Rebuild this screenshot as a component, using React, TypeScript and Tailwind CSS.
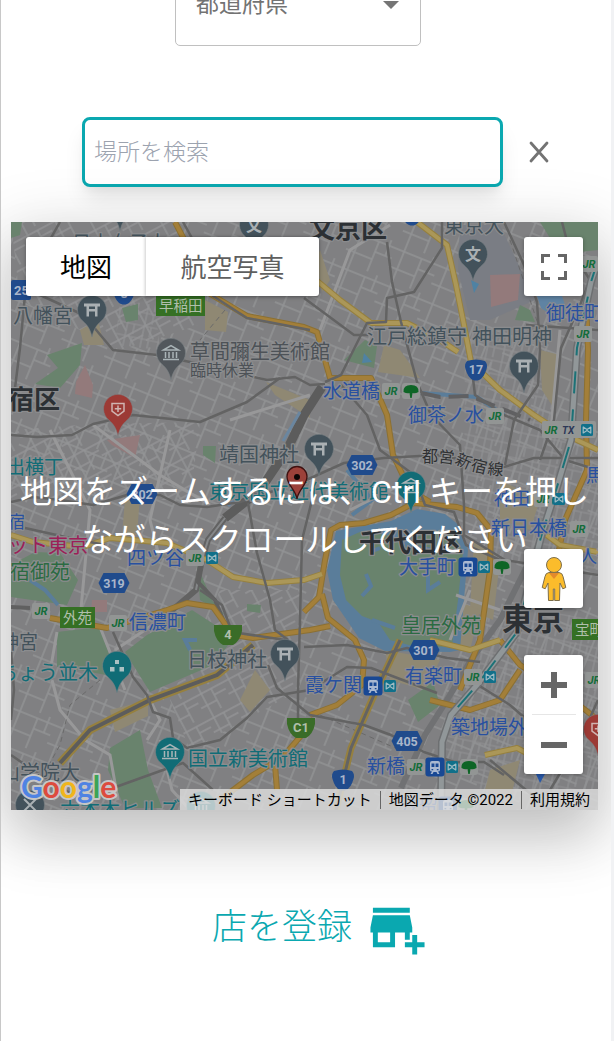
import React from "react";
import { MdAddBusiness } from "react-icons/md";

type Point = [number, number];

const line = (pts: Point[]) => pts.map((p) => p.join(",")).join(" ");

const GRAY = "#636363";
const SLATE = "#43525b";
const TEAL = "#116c76";
const BLUE = "#2850a0";
const GREEN = "#2b6b42";
const INK = "#2c3034";

const yellowRoads: Point[][] = [
  [[417, 222], [447, 245], [456, 285], [464, 325], [471, 362], [500, 390], [534, 415], [560, 432], [598, 450]],
  [[310, 275], [340, 300], [371, 323], [407, 323], [440, 340], [458, 352]],
  [[11, 535], [33, 542], [83, 547], [110, 538], [167, 543], [207, 560], [233, 577], [267, 583], [304, 580], [322, 574]],
  [[485, 755], [517, 748], [540, 760]],
  [[540, 530], [560, 545], [598, 552]],
  [[430, 640], [470, 650], [500, 640]],
];

const orangeRoads: Point[][] = [
  [[175, 222], [187, 245], [207, 292], [247, 316], [304, 327], [317, 332], [330, 378], [371, 378], [387, 415], [393, 455], [410, 490], [430, 502]],
  [[304, 612], [319, 597], [325, 560], [331, 530], [340, 525], [364, 523], [391, 515], [414, 503], [457, 507], [477, 513], [491, 530], [490, 570], [480, 640], [460, 690]],
  [[50, 618], [107, 628], [167, 610], [187, 603], [213, 607], [233, 635], [253, 638], [310, 630], [330, 626]],
  [[322, 594], [328, 618], [355, 640], [364, 660], [362, 685], [337, 705], [310, 715]],
  [[220, 800], [253, 775], [283, 757], [310, 725]],
  [[283, 757], [275, 765], [277, 790]],
  [[586, 300], [588, 350], [586, 420], [587, 470], [565, 520], [555, 570]],
  [[500, 640], [520, 665], [560, 690], [598, 720]],
  [[430, 700], [470, 710], [500, 700], [520, 670]],
];

const grayRoads: Point[][] = [
  [[60, 222], [43, 252], [25, 295], [20, 348], [15, 388]],
  [[183, 222], [193, 240], [213, 296], [247, 318], [310, 330]],
  [[40, 295], [77, 312], [92, 325], [113, 350], [157, 355], [190, 362], [267, 380], [295, 377], [310, 385], [325, 384]],
  [[11, 435], [37, 437], [72, 435], [93, 424], [133, 415], [200, 422], [247, 402], [280, 378]],
  [[11, 502], [33, 497], [60, 500], [93, 505], [127, 495], [160, 495], [180, 505], [207, 507], [240, 502], [304, 481], [344, 463], [384, 458], [437, 455], [504, 467], [534, 458], [598, 458]],
  [[248, 503], [257, 553], [270, 600], [275, 630], [288, 640]],
  [[312, 500], [302, 540], [300, 620], [298, 690], [298, 725]],
  [[25, 528], [70, 538], [105, 545]],
  [[113, 632], [133, 677], [147, 695], [153, 712], [170, 718], [173, 738], [187, 748], [220, 740], [247, 718], [267, 697], [310, 690], [347, 667], [371, 668], [437, 693]],
  [[11, 755], [40, 775], [70, 793], [113, 788], [163, 770], [183, 763], [213, 790]],
  [[268, 665], [277, 688], [310, 715], [364, 725], [391, 735], [424, 752], [454, 762], [484, 762], [504, 775]],
  [[304, 647], [347, 645], [387, 653], [407, 648], [447, 658], [480, 662]],
  [[387, 242], [392, 282], [401, 322], [417, 382], [431, 415], [460, 445], [464, 505]],
  [[442, 222], [442, 248], [414, 292], [387, 298], [386, 322], [367, 323], [341, 375], [325, 382]],
  [[304, 298], [354, 335], [368, 335]],
  [[504, 222], [524, 265], [537, 302], [540, 350], [538, 385], [514, 420], [505, 465]],
  [[562, 222], [568, 245], [590, 280], [580, 305], [561, 348], [554, 420], [540, 460]],
  [[526, 325], [598, 330]],
  [[471, 362], [475, 395], [504, 415], [540, 430], [565, 460], [598, 470]],
  [[341, 385], [367, 415], [380, 450], [414, 475], [425, 505], [454, 512], [466, 545], [500, 560]],
  [[464, 505], [464, 535], [505, 560], [598, 575]],
  [[200, 590], [222, 605], [232, 632], [285, 640]],
  [[11, 650], [14, 690], [11, 720]],
  [[598, 700], [580, 740], [550, 790]],
  [[490, 760], [520, 785], [550, 810]],
  [[470, 680], [510, 705], [550, 740]],
];

const greens: Point[][] = [
  [[147, 635], [192, 610], [215, 625], [232, 640], [213, 665], [150, 692], [125, 652]],
  [[57, 632], [100, 627], [117, 677], [90, 672], [57, 667]],
  [[11, 565], [35, 552], [60, 553], [78, 580], [67, 605], [11, 597]],
  [[47, 355], [82, 343], [80, 365], [60, 388], [35, 384], [58, 368]],
  [[110, 748], [140, 730], [148, 770], [162, 808], [125, 808], [108, 770]],
  [[344, 360], [365, 340], [377, 346], [374, 368]],
  [[540, 222], [598, 222], [598, 250], [560, 254]],
  [[408, 700], [433, 682], [440, 705], [418, 722]],
  [[122, 308], [138, 304], [138, 320], [126, 322]],
  [[520, 305], [530, 310], [535, 322], [515, 320]],
  [[197, 565], [212, 600], [225, 615], [200, 600]],
  [[247, 604], [261, 605], [260, 613], [247, 611]],
  [[203, 446], [216, 446], [215, 463], [203, 455]],
  [[11, 222], [22, 222], [20, 235], [11, 238]],
];

const beiges: Point[][] = [
  [[110, 710], [148, 700], [148, 716], [115, 732]],
  [[205, 300], [228, 312], [226, 332], [205, 330]],
  [[266, 382], [310, 400], [310, 418], [275, 395]],
  [[384, 345], [400, 350], [420, 378], [378, 372]],
  [[474, 540], [500, 560], [493, 620], [470, 610]],
  [[500, 480], [540, 500], [530, 530], [500, 520]],
  [[540, 350], [560, 355], [555, 410], [542, 390]],
  [[385, 650], [440, 660], [425, 690], [390, 680]],
  [[125, 500], [140, 495], [137, 535], [122, 535]],
  [[255, 670], [270, 690], [250, 712], [240, 700]],
  [[80, 330], [98, 320], [104, 345], [84, 345]],
  [[320, 250], [330, 280], [322, 292], [316, 260]],
  [[455, 600], [480, 610], [470, 650], [450, 640]],
  [[490, 770], [520, 760], [510, 800], [485, 790]],
];

const pinks: Point[][] = [
  [[490, 275], [520, 274], [518, 300], [491, 307]],
  [[85, 365], [93, 385], [92, 398], [75, 394], [76, 382]],
  [[107, 440], [140, 435], [135, 458], [112, 445]],
  [[92, 600], [107, 600], [107, 612], [91, 612]],
];

type Label = { t: string; x: number; y: number; s: number; c: string; b?: boolean };

const labels: Label[] = [
  { t: "日本女子大", x: 72, y: 250, s: 19, c: SLATE },
  { t: "文京区", x: 309, y: 238, s: 26, c: INK, b: true },
  { t: "東京大", x: 444, y: 233, s: 20, c: SLATE },
  { t: "八幡宮", x: 13, y: 323, s: 20, c: SLATE },
  { t: "草間彌生美術館", x: 190, y: 359, s: 20, c: "#4d5257" },
  { t: "臨時休業", x: 190, y: 376, s: 16, c: "#4d5257" },
  { t: "宿区", x: 8, y: 409, s: 26, c: INK, b: true },
  { t: "江戸総鎮守 神田明神", x: 367, y: 344, s: 20, c: SLATE },
  { t: "御徒町", x: 546, y: 320, s: 19, c: BLUE },
  { t: "水道橋", x: 323, y: 398, s: 19, c: BLUE },
  { t: "御茶ノ水", x: 408, y: 422, s: 19, c: BLUE },
  { t: "靖国神社", x: 219, y: 462, s: 20, c: SLATE },
  { t: "出横丁", x: 6, y: 474, s: 19, c: TEAL },
  { t: "東京国立近代美術館", x: 209, y: 499, s: 20, c: TEAL },
  { t: "神田", x: 494, y: 505, s: 18, c: BLUE },
  { t: "馬", x: 586, y: 482, s: 18, c: BLUE },
  { t: "宿", x: 8, y: 528, s: 17, c: BLUE },
  { t: "ット東京", x: 8, y: 553, s: 20, c: "#9c2057" },
  { t: "宿御苑", x: 10, y: 579, s: 20, c: GREEN },
  { t: "四ツ谷", x: 127, y: 565, s: 19, c: BLUE },
  { t: "新日本橋", x: 491, y: 535, s: 19, c: BLUE },
  { t: "千代田区", x: 359, y: 552, s: 26, c: INK, b: true },
  { t: "大手町", x: 399, y: 574, s: 19, c: BLUE },
  { t: "人形", x: 579, y: 563, s: 18, c: BLUE },
  { t: "信濃町", x: 129, y: 629, s: 19, c: BLUE },
  { t: "神宮", x: 0, y: 649, s: 19, c: SLATE },
  { t: "ちょう並木", x: -2, y: 680, s: 20, c: TEAL },
  { t: "日枝神社", x: 187, y: 667, s: 20, c: SLATE },
  { t: "皇居外苑", x: 401, y: 633, s: 20, c: GREEN },
  { t: "東京", x: 502, y: 630, s: 31, c: INK, b: true },
  { t: "霞ケ関", x: 305, y: 692, s: 19, c: BLUE },
  { t: "有楽町", x: 405, y: 683, s: 19, c: BLUE },
  { t: "築地場外", x: 451, y: 734, s: 19, c: BLUE },
  { t: "国立新美術館", x: 188, y: 766, s: 20, c: TEAL },
  { t: "新橋", x: 367, y: 773, s: 19, c: BLUE },
  { t: "山学院大", x: 0, y: 780, s: 20, c: SLATE },
  { t: "六本木ヒルズ", x: 60, y: 817, s: 20, c: TEAL },
  { t: "汐留", x: 400, y: 813, s: 19, c: BLUE },
];

const subwayLabel: { t: string; x: number; y: number; r: number }[] = [
  { t: "都", x: 422, y: 462, r: 0 },
  { t: "営", x: 438, y: 462, r: 6 },
  { t: "新", x: 454, y: 463, r: 24 },
  { t: "宿", x: 470, y: 470, r: 14 },
  { t: "線", x: 487, y: 474, r: 6 },
];

function Pin({ x, y, fill, children }: { x: number; y: number; fill: string; children?: React.ReactNode }) {
  return (
    <g transform={`translate(${x} ${y})`}>
      <path
        d="M0 27C-2 18-5 15-9.500 10.800A14.500 14.500 0 1 1 9.500 10.800C5 15 2 18 0 27Z"
        fill={fill}
        stroke="#7b8285"
        strokeWidth="0.600"
      />
      {children}
    </g>
  );
}

function Torii() {
  return <path d="M-8-6.500H8V-3.500H5.500V0H5.500V6.500H3V1.500H-3V6.500H-5.500V-3.500H-8ZM-3-3.500V-1H3V-3.500Z" fill="#aab0b3" fillRule="evenodd" />;
}

function Museum() {
  return (
    <g fill="none" stroke="#aab4b7" strokeWidth="1.500">
      <path d="M-7.500-3L0-7.500L7.500-3Z" />
      <path d="M-5.500-1V5M-2-1V5M2-1V5M5.500-1V5M-8 6.500H8" />
    </g>
  );
}

function School() {
  return (
    <text y="6" textAnchor="middle" fontSize="16" fontWeight="700" fill="#aab0b3">
      文
    </text>
  );
}

function Cross() {
  return (
    <g fill="none" stroke="#d0b4b1" strokeWidth="1.500">
      <path d="M-6-5.500H6V2L0 6.500L-6 2Z" />
      <path d="M0-3.500V3M-3.200-.300H3.200" />
    </g>
  );
}

function Jr({ x, y }: { x: number; y: number }) {
  return (
    <g transform={`translate(${x} ${y})`}>
      <rect x="-9" y="-8" width="18" height="16" rx="2" fill="#929594" />
      <text y="4" textAnchor="middle" fontFamily="Inter, sans-serif" fontSize="10.500" fontWeight="700" fontStyle="italic" fill="#136c3a">
        JR
      </text>
    </g>
  );
}

function Metro({ x, y }: { x: number; y: number }) {
  return (
    <g transform={`translate(${x} ${y})`}>
      <rect x="-6" y="-6" width="12" height="12" rx="1.500" fill="#11708a" />
      <path d="M-3.800-3V3L0 .500L3.800 3V-3L0-.500Z" fill="none" stroke="#9ebcc4" strokeWidth="1.200" strokeLinejoin="round" />
    </g>
  );
}

function Train({ x, y }: { x: number; y: number }) {
  return (
    <g transform={`translate(${x} ${y})`}>
      <rect x="-9.500" y="-9.500" width="19" height="19" rx="3" fill="#184894" />
      <path d="M-3-6H3Q5-6 5-4V3Q5 4.500 3 4.500L4.500 7H2.500L1.500 5H-1.500L-2.500 7H-4.500L-3 4.500Q-5 4.500-5 3V-4Q-5-6-3-6Z" fill="#a9b8d1" />
      <path d="M-3.500-3.500H-.600V0H-3.500ZM.600-3.500H3.500V0H.600ZM-3.500 2H-1.800V3.300H-3.500ZM1.800 2H3.500V3.300H1.800Z" fill="#184894" />
    </g>
  );
}

function Ginkgo({ x, y }: { x: number; y: number }) {
  return (
    <g transform={`translate(${x} ${y})`}>
      <rect x="-9" y="-8" width="18" height="16" rx="3" fill="#929594" />
      <path d="M-7.500 1Q-8-6 0-6Q8-6 7.500 1Q4 3 1.500 2L.700 7H-.700L-1.500 2Q-4 3-7.500 1Z" fill="#0e6526" />
    </g>
  );
}

function Hex({ x, y, t }: { x: number; y: number; t: string }) {
  return (
    <g transform={`translate(${x} ${y})`}>
      <path d="M-15.500 0L-10.500-10H10.500L15.500 0L10.500 10H-10.500Z" fill="#204b8c" />
      <text y="4.500" textAnchor="middle" fontSize="12.500" fontWeight="700" fill="#a9b6ca">
        {t}
      </text>
    </g>
  );
}

function Shield({ x, y, t }: { x: number; y: number; t: string }) {
  return (
    <g transform={`translate(${x} ${y})`}>
      <path d="M-9-9Q0-12 9-9Q12-6 10.500-1Q8 8 3 10Q0 11-3 10Q-8 8-10.500-1Q-12-6-9-9Z" fill="#204b8c" />
      <text y="4" textAnchor="middle" fontSize="12.500" fontWeight="700" fill="#a9b6ca">
        {t}
      </text>
    </g>
  );
}

function Express({ x, y, t }: { x: number; y: number; t: string }) {
  return (
    <g transform={`translate(${x} ${y})`}>
      <path d="M-14-10H14V-4Q12 6 5 10H-5Q-12 6-14-4Z" fill="#3a6c28" />
      <text y="4" textAnchor="middle" fontSize="13" fontWeight="700" fill="#b0bfab">
        {t}
      </text>
    </g>
  );
}

function Interchange({ x, y, w, t }: { x: number; y: number; w: number; t: string }) {
  return (
    <g transform={`translate(${x} ${y})`}>
      <rect width={w} height="21" fill="#357024" />
      <text x="3" y="16" fontSize="14.500" fill="#b0bfab">
        {t}
      </text>
    </g>
  );
}

function MapArt() {
  return (
    <svg
      viewBox="11 222 587 588"
      preserveAspectRatio="xMidYMid slice"
      className="absolute inset-0 h-full w-full font-['Roboto','Noto_Sans_CJK_JP',sans-serif]"
      aria-hidden="true"
    >
      <defs>
        <pattern id="streets-a" width="46" height="38" patternUnits="userSpaceOnUse" patternTransform="rotate(22)">
          <path d="M0 6H46M0 25H28M28 17H46M9 0V38M28 6V38M39 0V17" stroke="#929395" strokeWidth="1.500" fill="none" />
        </pattern>
        <pattern id="streets-b" width="31" height="27" patternUnits="userSpaceOnUse" patternTransform="rotate(-28)">
          <path d="M0 5H31M0 18H18M7 0V27M18 5V27M18 12H31" stroke="#939496" strokeWidth="1.400" fill="none" />
        </pattern>
        <pattern id="streets-c" width="17" height="13" patternUnits="userSpaceOnUse" patternTransform="rotate(12)">
          <path d="M0 3H17M5 0V13M12 3V13" stroke="#919294" strokeWidth="1.200" fill="none" />
        </pattern>
      </defs>
      <rect x="11" y="222" width="587" height="588" fill="#808082" />
      <rect x="11" y="222" width="587" height="588" fill="url(#streets-a)" />
      <polygon points="11,222 175,222 215,320 120,350 20,300" fill="#808082" />
      <polygon points="11,222 175,222 215,320 120,350 20,300" fill="url(#streets-b)" />
      <polygon points="11,430 93,424 200,422 190,500 11,500" fill="url(#streets-b)" />
      <polygon points="220,590 300,590 300,690 190,750 170,700" fill="#808082" />
      <polygon points="220,590 300,590 300,690 190,750 170,700" fill="url(#streets-b)" />
      <polygon points="120,300 155,305 160,350 115,345" fill="url(#streets-c)" />
      <polygon points="465,330 540,330 560,430 598,460 598,570 500,560 464,500" fill="url(#streets-c)" />
      <polygon points="480,600 598,620 598,810 490,800 440,745" fill="url(#streets-c)" />
      <polygon points="460,225 500,225 535,300 490,320 470,320 458,270" fill="#7a7d84" />
      {beiges.map((p, i) => (
        <polygon key={i} points={line(p)} fill="#8f8873" />
      ))}
      {pinks.map((p, i) => (
        <polygon key={i} points={line(p)} fill="#937a7b" />
      ))}
      {greens.map((p, i) => (
        <polygon key={i} points={line(p)} fill="#69836d" />
      ))}
      <polygon
        points="336,531 358,527 391,521 417,509 445,514 460,526 468,550 464,600 460,650 450,652 385,651 359,638 333,600 327,570"
        fill="#5a7d9a"
      />
      <polygon
        points="342,540 362,531 392,536 405,545 425,532 452,530 463,552 458,600 452,646 420,648 390,640 378,622 362,616 346,600 340,575"
        fill="#69836d"
      />
      <path d="M380 548L370 552M366 574L371 586L362 596M405 545L432 550M428 560L428 590L440 582M395 628L372 620" fill="none" stroke="#5a7d9a" strokeWidth="4" />
      <path d="M421 393L477 397L504 415M30 580L45 590L58 605M190 650L185 640L197 640M347 470L372 500L352 515" fill="none" stroke="#5a7d9a" strokeWidth="4" />
      <polygon points="537,296 562,296 566,308 556,318 541,308" fill="#5f83a3" />
      <polygon points="364,353 372,362 362,363" fill="#4f82a3" />
      <polygon points="471,280 479,284 474,293" fill="#4f82a3" />
      <g fill="none" stroke="#989899" strokeWidth="3">
        <path d="M170 430L150 520L160 560M93 425L160 475L210 505M50 430L90 510L80 620M320 330L350 250L390 225M52 680L60 710L85 740L110 755L118 800M147 740L160 720L150 700" />
        <path d="M350 510L420 475M456 595L500 610M230 420L310 395M560 330L550 440M470 590L450 640M115 650L160 620M57 632L50 672M100 627L125 690M160 740L172 790L190 810" />
      </g>
      <g fill="none" stroke="#6a6a6a" strokeWidth="1" strokeDasharray="5 4">
        <path d="M100 680L70 705L60 745L35 790M225 310L200 340M510 240L530 300L540 330M320 715L400 750" />
      </g>
      <path d="M322 387L304 415L287 450L260 490L225 518" fill="none" stroke="#5c5c5c" strokeWidth="9" />
      <path d="M300 412L283 441M228 506L252 484" fill="none" stroke="#6a86a0" strokeWidth="3" />
      <path d="M225 518L208 540L202 560L196 590L170 612" fill="none" stroke="#626262" strokeWidth="6" />
      <path d="M225 518L208 540L202 560L196 590" fill="none" stroke="#858789" strokeWidth="2" />
      <path d="M202 560L198 582L215 600L228 632M11 607L30 608" fill="none" stroke="#606060" strokeWidth="4" />
      <path d="M421 393L440 397L470 396L485 402L530 420" fill="none" stroke="#606062" strokeWidth="4" strokeDasharray="20 8" />
      <path d="M530 560L500 620L471 660L447 700L425 735L401 788" fill="none" stroke="#707173" strokeWidth="6" />
      {orangeRoads.map((p, i) => (
        <polyline key={i} points={line(p)} fill="none" stroke="#8b7034" strokeWidth="6" strokeLinejoin="round" />
      ))}
      {orangeRoads.map((p, i) => (
        <polyline key={i} points={line(p)} fill="none" stroke="#a37f39" strokeWidth="4" strokeLinejoin="round" />
      ))}
      {yellowRoads.map((p, i) => (
        <polyline key={i} points={line(p)} fill="none" stroke="#96803f" strokeWidth="6" strokeLinejoin="round" />
      ))}
      {yellowRoads.map((p, i) => (
        <polyline key={i} points={line(p)} fill="none" stroke="#ab9758" strokeWidth="4" strokeLinejoin="round" />
      ))}
      <polyline points="60,763 90,730 150,700 217,675 253,645" fill="none" stroke="#96803f" strokeWidth="8" />
      <polyline points="60,763 90,730 150,700 217,675 253,645" fill="none" stroke="#5c5c5c" strokeWidth="4" />
      <polyline points="400,640 374,695 351,748 336,810" fill="none" stroke="#96803f" strokeWidth="7" />
      <polyline points="400,640 374,695 351,748 336,810" fill="none" stroke={GRAY} strokeWidth="3" />
      {grayRoads.map((p, i) => (
        <polyline key={i} points={line(p)} fill="none" stroke={GRAY} strokeWidth="2.500" strokeLinejoin="round" />
      ))}
      <path d="M598 260L591 282L577 348L571 440L557 487L541 537L517 632L477 685L451 715L442 742L441 810" fill="none" stroke="#6d6f71" strokeWidth="8" />
      <path d="M598 260L591 282L577 348L571 440L557 487L541 537L517 632L477 685L451 715L442 742L441 810" fill="none" stroke="#919799" strokeWidth="5" />
      <path d="M598 260L591 282L577 348L571 440L557 487L541 537L517 632L477 685L451 715" fill="none" stroke="#1b7277" strokeWidth="2" strokeDasharray="22 16" />

      {labels.map((l) => (
        <text
          key={l.t}
          x={l.x}
          y={l.y}
          fontSize={l.s}
          fontWeight={l.b ? 700 : 400}
          fill={l.c}
          stroke="#8b8c8e"
          strokeWidth="2.500"
          strokeLinejoin="round"
          paintOrder="stroke"
        >
          {l.t}
        </text>
      ))}
      {subwayLabel.map((l) => (
        <text key={l.t} transform={`translate(${l.x} ${l.y}) rotate(${l.r})`} fontSize="16" fill="#2f3133" stroke="#8b8c8e" strokeWidth="2" paintOrder="stroke">
          {l.t}
        </text>
      ))}

      <Hex x={362} y={465} t="302" />
      <Hex x={142} y={494} t="302" />
      <Hex x={114} y={583} t="319" />
      <Hex x={424} y={650} t="301" />
      <Hex x={407} y={741} t="405" />
      <Shield x={476} y={370} t="17" />
      <Shield x={343} y={780} t="1" />
      <Shield x={124} y={294} t="8" />
      <Shield x={412} y={215} t="" />
      <rect x="11" y="280" width="20" height="20" rx="2" fill="#204b8c" />
      <text x="14" y="295" fontSize="13" fontWeight="700" fill="#a9b6ca">25</text>
      <Express x={228} y={635} t="4" />
      <Express x={301} y={728} t="C1" />
      <Interchange x={156} y={295} w={49} t="早稲田" />
      <Interchange x={60} y={607} w={35} t="外苑" />
      <Interchange x={572} y={619} w={35} t="宝町" />

      <Jr x={391} y={391} />
      <Ginkgo x={411} y={391} />
      <Jr x={495} y={416} />
      <Jr x={589} y={264} />
      <Jr x={583} y={334} />
      <rect x="542" y="421" width="54" height="17" rx="2" fill="#929594" />
      <Jr x={551} y={430} />
      <text x="562" y="434" fontSize="10" fontStyle="italic" fontWeight="700" fill="#2d3857">TX</text>
      <Metro x={587} y={430} />
      <Jr x={195} y={558} />
      <Metro x={212} y={558} />
      <Jr x={543} y={499} />
      <Metro x={559} y={499} />
      <Jr x={579} y={529} />
      <Train x={468} y={567} />
      <Metro x={484} y={567} />
      <Ginkgo x={502} y={567} />
      <Jr x={41} y={611} />
      <Jr x={118} y={623} />
      <Train x={373} y={686} />
      <Metro x={390} y={686} />
      <Jr x={473} y={677} />
      <Metro x={490} y={677} />
      <Jr x={594} y={680} />
      <Jr x={416} y={767} />
      <Train x={435} y={767} />
      <Metro x={452} y={767} />
      <Ginkgo x={469} y={767} />
      <Train x={448} y={806} />
      <Ginkgo x={466} y={806} />
      <path d="M536 774H545L540 783Z" fill="#2858a8" />

      <Pin x={120} y={204} fill={SLATE} />
      <Pin x={254} y={225} fill={SLATE}><School /></Pin>
      <Pin x={473} y={254} fill={SLATE}><School /></Pin>
      <Pin x={92} y={310} fill={SLATE}><Torii /></Pin>
      <Pin x={171} y={353} fill="#52575c"><Museum /></Pin>
      <Pin x={118} y={409} fill="#9c3a35"><Cross /></Pin>
      <Pin x={524} y={366} fill={SLATE}><Torii /></Pin>
      <Pin x={319} y={449} fill={SLATE}><Torii /></Pin>
      <Pin x={411} y={486} fill={TEAL}><Museum /></Pin>
      <Pin x={285} y={654} fill={SLATE}><Torii /></Pin>
      <Pin x={117} y={666} fill={TEAL}>
        <path d="M-2-6H2V-2H-2ZM-7 1H-2.500V5.500H-7ZM2.500 1H7V5.500H2.500Z" fill="#aac1c3" />
      </Pin>
      <Pin x={170} y={752} fill={TEAL}><Museum /></Pin>
      <Pin x={598} y={729} fill="#9c3a35"><Cross /></Pin>
      <Pin x={30} y={805} fill={SLATE}>
        <path d="M-6-6L6 6M6-6L-6 6" stroke="#aab0b3" strokeWidth="2" />
      </Pin>
      <Pin x={201} y={806} fill={TEAL}><Museum /></Pin>

      <path d="M297 499C296 490 287 485 287 476.500A10 10 0 0 1 307 476.500C307 485 298 490 297 499Z" fill="#9c413a" stroke="#3e1110" strokeWidth="1.300" />
      <circle cx="297" cy="477" r="3" fill="#0d0505" />
    </svg>
  );
}

const googleLetters = [
  { t: "G", c: "#4f83e3" },
  { t: "o", c: "#dd4b3e" },
  { t: "o", c: "#f0b51b" },
  { t: "g", c: "#4f83e3" },
  { t: "l", c: "#3ba455" },
  { t: "e", c: "#dd4b3e" },
];

function GoogleLogo() {
  return (
    <svg viewBox="0 0 100 40" className="h-10 w-[100px]" role="img" aria-label="Google">
      <g fontFamily="Lato, sans-serif" fontSize="30" fontWeight="700" strokeLinejoin="round">
        <text x="3" y="28" fill="#c6c6c6" stroke="#c6c6c6" strokeWidth="4" aria-hidden="true">
          Google
        </text>
        <text x="3" y="28">
          {googleLetters.map((l, i) => (
            <tspan key={i} fill={l.c}>
              {l.t}
            </tspan>
          ))}
        </text>
      </g>
    </svg>
  );
}

function Pegman() {
  return (
    <svg viewBox="0 0 26 46" className="h-[46px] w-[26px]" aria-hidden="true">
      <g fill="#fbbc2b" stroke="#7d6f4c" strokeWidth="1">
        <path d="M8 16.500Q4.500 17 4 20.500L1.200 31.500L4.200 32.800L7 27L7.500 44.500H12.300V33H13.700V44.500H18.500L19 27L21.800 32.800L24.800 31.500L22 20.500Q21.500 17 18 16.500Z" />
        <circle cx="13" cy="9" r="7.500" />
      </g>
      <path d="M8 17H18L13 23Z" fill="#e38a2c" />
    </svg>
  );
}

const control = "flex items-center justify-center rounded-[3px] bg-white shadow-[0_1px_4px_rgba(0,0,0,0.3)]";

export default function App() {
  return (
    <div className="flex min-h-screen w-full overflow-hidden bg-white font-['Roboto','Noto_Sans_CJK_JP',sans-serif]">
      <main className="min-w-0 flex-1 overflow-hidden border-l border-[#c8c8c8] pb-20">
        <div className="relative -mt-9 ml-[174px] flex h-[82px] w-[246px] items-center">
          <select
            aria-label="都道府県"
            className="h-full w-full appearance-none rounded-[5px] border border-[#c0c0c0] bg-white pl-5 text-[23px] text-[#737373] outline-none"
          >
            <option>都道府県</option>
          </select>
          <svg viewBox="0 0 16 8" className="pointer-events-none absolute right-[22px] h-2 w-4" aria-hidden="true">
            <path d="M0 0H16L8 8Z" fill="#757575" />
          </svg>
        </div>

        <div className="mt-[71px] flex items-center gap-4 pl-[81px]">
          <input
            type="text"
            aria-label="場所を検索"
            placeholder="場所を検索"
            className="h-[70px] w-[421px] min-w-0 rounded-lg border-[3px] border-[#0aa8b0] bg-white px-[9px] text-[23px] font-light shadow-[0_15px_22px_-4px_rgba(0,0,0,0.1),0_6px_9px_-3px_rgba(0,0,0,0.05)] outline-none placeholder:text-[#9ca3af]"
          />
          <button type="button" aria-label="クリア" className="flex h-10 w-10 items-center justify-center">
            <svg viewBox="0 0 22 22" className="h-[22px] w-[22px]" aria-hidden="true">
              <path d="M3 2L19 20M19 2L3 20" stroke="#737373" strokeWidth="2.800" strokeLinecap="round" />
            </svg>
          </button>
        </div>

        <section
          aria-label="地図"
          className="relative mt-[35px] mr-[13px] ml-[10px] aspect-[587/588] bg-[#808082] shadow-[0_10px_60px_6px_rgba(0,0,0,0.12),0_32px_55px_0_rgba(0,0,0,0.16)]"
        >
          <div className="absolute inset-0 overflow-hidden">
            <MapArt />
          </div>

          <p className="absolute inset-0 flex items-center justify-center text-center text-[32px] leading-[48px] text-white">
            <span className="whitespace-nowrap">
              地図をズームするには、Ctrl キーを押し
              <br />
              ながらスクロールしてください
            </span>
          </p>

          <div className="absolute top-[15px] left-[15px] flex h-[59px] rounded-[3px] bg-white text-[26px] shadow-[0_1px_4px_rgba(0,0,0,0.3)]">
            <button type="button" className="w-[120px] pt-1 text-black">
              地図
            </button>
            <button type="button" className="w-[173px] pt-1 text-[#5f5f5f] shadow-[-1px_0_3px_rgba(0,0,0,0.2)]">
              航空写真
            </button>
          </div>

          <button type="button" aria-label="全画面表示" className={`${control} absolute top-[15px] right-[15px] h-[59px] w-[59px]`}>
            <svg viewBox="0 0 26 26" className="h-[26px] w-[26px]" aria-hidden="true">
              <path d="M1.500 9V1.500H9M17 1.500H24.500V9M24.500 17V24.500H17M9 24.500H1.500V17" fill="none" stroke="#666" strokeWidth="3" />
            </svg>
          </button>

          <div className="absolute right-[15px] bottom-9 flex flex-col gap-[47px]">
            <button type="button" aria-label="ストリートビュー" className={`${control} h-[59px] w-[59px]`}>
              <Pegman />
            </button>
            <div className={`${control} w-[59px] flex-col`}>
              <button type="button" aria-label="拡大" className="flex h-[59px] w-full items-center justify-center">
                <svg viewBox="0 0 26 26" className="h-[26px] w-[26px]" aria-hidden="true">
                  <path d="M13 0V26M0 13H26" stroke="#666" strokeWidth="6" />
                </svg>
              </button>
              <div className="h-px w-11 bg-[#e6e6e6]" />
              <button type="button" aria-label="縮小" className="flex h-[59px] w-full items-center justify-center">
                <svg viewBox="0 0 26 26" className="h-[26px] w-[26px]" aria-hidden="true">
                  <path d="M0 13H26" stroke="#666" strokeWidth="6" />
                </svg>
              </button>
            </div>
          </div>

          <div className="absolute bottom-0 left-[7px]">
            <GoogleLogo />
          </div>

          <div className="absolute right-0 bottom-0 flex h-[21px] items-center divide-x divide-[#666] bg-[#e0e0e0]/80 text-[15px] leading-[18px] whitespace-nowrap text-black">
            <button type="button" className="px-2">
              キーボード ショートカット
            </button>
            <span className="px-2">地図データ ©2022</span>
            <a href="#terms" className="px-2">
              利用規約
            </a>
          </div>
        </section>

        <a href="#register" className="mt-[88px] ml-[211px] flex w-fit items-center gap-4 text-[35px] leading-[59px] font-light text-[#0aa8b0]">
          店を登録
          <MdAddBusiness className="h-[59px] w-[59px]" aria-hidden="true" />
        </a>
      </main>
      <div className="w-[3px] bg-[#f1f2f4]" />
    </div>
  );
}
